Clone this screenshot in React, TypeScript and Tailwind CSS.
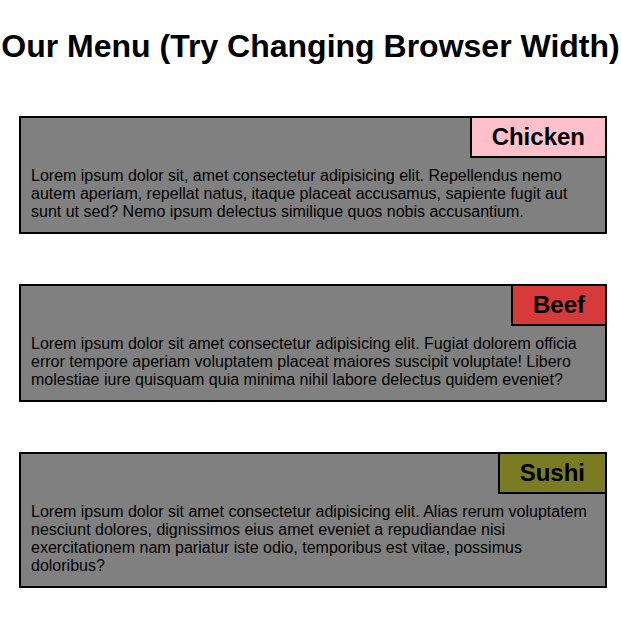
import React from 'react';

interface MenuItem {
  name: string;
  color: string;
  text: string;
}

const items: MenuItem[] = [
  {
    name: 'Chicken',
    color: 'bg-[#ffc0cb]',
    text: 'Lorem ipsum dolor sit, amet consectetur adipisicing elit. Repellendus nemo autem aperiam, repellat natus, itaque placeat accusamus, sapiente fugit aut sunt ut sed? Nemo ipsum delectus similique quos nobis accusantium.',
  },
  {
    name: 'Beef',
    color: 'bg-[#d63a3a]',
    text: 'Lorem ipsum dolor sit amet consectetur adipisicing elit. Fugiat dolorem officia error tempore aperiam voluptatem placeat maiores suscipit voluptate! Libero molestiae iure quisquam quia minima nihil labore delectus quidem eveniet?',
  },
  {
    name: 'Sushi',
    color: 'bg-[#7b7b24]',
    text: 'Lorem ipsum dolor sit amet consectetur adipisicing elit. Alias rerum voluptatem nesciunt dolores, dignissimos eius amet eveniet a repudiandae nisi exercitationem nam pariatur iste odio, temporibus est vitae, possimus doloribus?',
  },
];

const MenuCard: React.FC<{ item: MenuItem }> = ({ item }) => (
  <div className="relative border-2 border-black bg-[#808080] pt-[49px] pb-[11px] px-[10px]">
    <div
      className={`absolute -top-[2px] -right-[2px] border-2 border-black ${item.color} px-[20px] py-[5px] text-[24px] leading-[28px] font-bold text-black`}
    >
      {item.name}
    </div>
    <p className="text-[16px] leading-[18px] text-black">{item.text}</p>
  </div>
);

const App: React.FC = () => {
  return (
    <div className="min-h-screen bg-white font-['Liberation_Sans',Arial,sans-serif] pb-[33px]">
      <h1 className="pt-[28px] text-center text-[32px] leading-[37px] font-bold text-black whitespace-nowrap">
        Our Menu (Try Changing Browser Width)
      </h1>

      {/* menu cards */}
      <div className="mt-[51px] flex flex-col gap-[50px] pl-[19px] pr-[14px]">
        {items.map(item => (
          <MenuCard key={item.name} item={item} />
        ))}
      </div>
    </div>
  );
};

export default App;
